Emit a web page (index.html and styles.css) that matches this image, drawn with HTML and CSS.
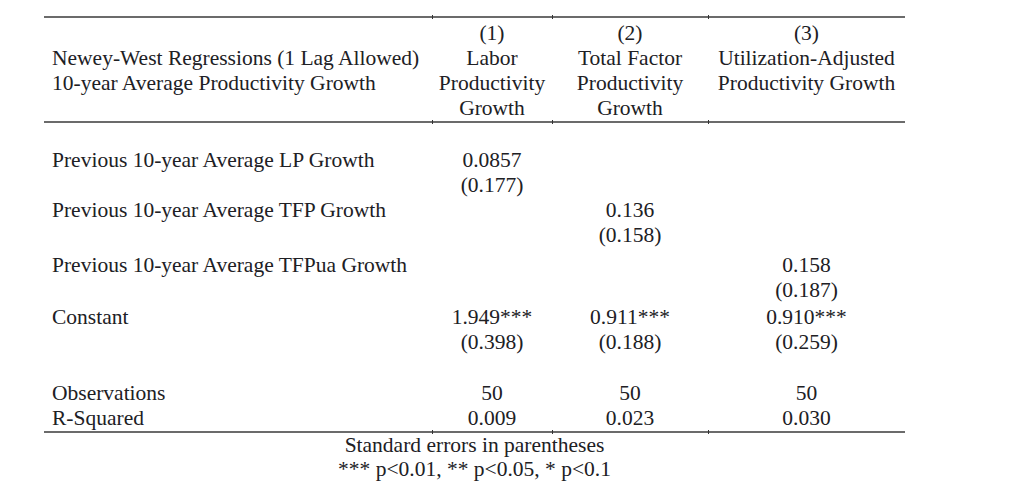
FILE: index.html
```html
<!DOCTYPE html>
<html lang="en">
<head>
<meta charset="utf-8">
<title>Newey-West Regressions</title>
<link rel="stylesheet" href="styles.css">
</head>
<body>
<div class="wrap">
  <table class="reg">
    <colgroup>
      <col class="c0"><col class="c1"><col class="c2"><col class="c3">
    </colgroup>
    <thead>
      <tr class="r-top">
        <th></th><th class="tick">(1)</th><th class="tick">(2)</th><th class="tick">(3)</th>
      </tr>
      <tr>
        <th class="lbl">Newey-West Regressions (1 Lag Allowed)</th><th>Labor</th><th>Total Factor</th><th>Utilization-Adjusted</th>
      </tr>
      <tr>
        <th class="lbl">10-year Average Productivity Growth</th><th>Productivity</th><th>Productivity</th><th>Productivity Growth</th>
      </tr>
      <tr class="r-bot">
        <th></th><th class="tick">Growth</th><th class="tick">Growth</th><th class="tick"></th>
      </tr>
    </thead>
    <tbody>
      <tr class="gap-first">
        <td class="lbl">Previous 10-year Average LP Growth</td><td>0.0857</td><td></td><td></td>
      </tr>
      <tr>
        <td></td><td>(0.177)</td><td></td><td></td>
      </tr>
      <tr>
        <td class="lbl">Previous 10-year Average TFP Growth</td><td></td><td>0.136</td><td></td>
      </tr>
      <tr>
        <td></td><td></td><td>(0.158)</td><td></td>
      </tr>
      <tr class="gap-s">
        <td class="lbl">Previous 10-year Average TFPua Growth</td><td></td><td></td><td>0.158</td>
      </tr>
      <tr>
        <td></td><td></td><td></td><td>(0.187)</td>
      </tr>
      <tr class="gap-xs">
        <td class="lbl">Constant</td><td>1.949***</td><td>0.911***</td><td>0.910***</td>
      </tr>
      <tr>
        <td></td><td>(0.398)</td><td>(0.188)</td><td>(0.259)</td>
      </tr>
      <tr class="gap-l">
        <td class="lbl">Observations</td><td>50</td><td>50</td><td>50</td>
      </tr>
      <tr class="r-end">
        <td class="lbl">R-Squared</td><td class="tick">0.009</td><td class="tick">0.023</td><td class="tick">0.030</td>
      </tr>
    </tbody>
  </table>
  <div class="notes">
    <p>Standard errors in parentheses</p>
    <p>*** p&lt;0.01, ** p&lt;0.05, * p&lt;0.1</p>
  </div>
</div>
</body>
</html>
```

FILE: styles.css
```css
html, body {
  margin: 0;
  padding: 0;
  background: #ffffff;
}

body {
  color: #202024;
  font-family: "Liberation Serif", "Times New Roman", serif;
  font-size: 21.5px;
}

.wrap {
  width: 861px;
  margin: 16px 0 0 44px;
}

.reg {
  width: 861px;
  table-layout: fixed;
  border-collapse: separate;
  border-spacing: 0;
  line-height: 25px;
}

.reg .c0 { width: 388px; }
.reg .c1 { width: 120px; }
.reg .c2 { width: 156px; }
.reg .c3 { width: 197px; }

.reg th,
.reg td {
  padding: 0;
  font-weight: normal;
  text-align: center;
  white-space: nowrap;
  vertical-align: top;
  height: 25px;
}

.reg .lbl {
  text-align: left;
  padding-left: 8px;
}

.reg .r-top th {
  border-top: 2px solid #6b6b6b;
  padding-top: 3px;
}

.reg .r-bot th {
  border-bottom: 2px solid #6b6b6b;
}

.reg .gap-first td { padding-top: 25px; }
.reg .gap-s td { padding-top: 5px; }
.reg .gap-xs td { padding-top: 2px; }
.reg .gap-l td { padding-top: 26px; }

.reg .r-end td {
  border-bottom: 2px solid #6b6b6b;
}

/* small joint marks where the column edges meet the rules */
.reg .tick { position: relative; }

.reg .r-top .tick::before,
.reg .r-bot .tick::before,
.reg .r-end .tick::before {
  content: "";
  position: absolute;
  left: 0;
  width: 1px;
  height: 4px;
  background: #333;
}

.reg .r-top .tick::before { top: -3px; }
.reg .r-bot .tick::before,
.reg .r-end .tick::before { bottom: -3px; }

.notes {
  margin-top: 0;
  text-align: center;
  line-height: 24px;
}

.notes p {
  margin: 0;
}
```
